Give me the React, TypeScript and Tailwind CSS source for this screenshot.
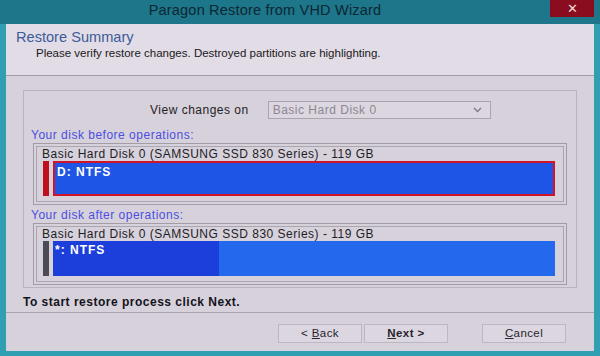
import React from "react";

const font = { fontFamily: '"Liberation Sans", Arial, sans-serif' };

function Partition({
  label,
  barColor,
  border,
  split,
}: {
  label: string;
  barColor: string;
  border: string;
  split?: boolean;
}) {
  return (
    <div className="flex h-[35px] gap-[4px] pl-[6px] pr-[8px]">
      <div className={`w-[6px] ${barColor}`} />
      <div className={`flex flex-1 ${border}`}>
        <div className={`relative ${split ? "w-[166px] bg-[#1c3fdc]" : "flex-1 bg-[#1e55e6]"}`}>
          <span className="absolute left-[2px] top-0 text-[12px] font-bold tracking-[1px] text-white">{label}</span>
        </div>
        {split && <div className="flex-1 bg-[#2468ee]" />}
      </div>
    </div>
  );
}

function DiskBox({ children }: { children: React.ReactNode }) {
  return (
    <div className="ml-[9px] mr-[9px] border border-[#a19ca6] p-[2px]">
      <div className="flex h-[56px] flex-col border border-[#aaa5ae]">
        <div className="h-[14px] pl-[5px] text-[12px] leading-[14px] tracking-[0.5px] text-[#1d1d24]">
          Basic Hard Disk 0 (SAMSUNG SSD 830 Series) - 119 GB
        </div>
        {children}
      </div>
    </div>
  );
}

function Btn({ children, bold }: { children: React.ReactNode; bold?: boolean }) {
  return (
    <div
      className={`flex h-[19px] w-[84px] items-center justify-center border border-[#bdb7c2] bg-[#dcd6e0] text-[11.5px] tracking-[0.4px] text-[#26242c] ${bold ? "font-bold" : ""}`}
    >
      {children}
    </div>
  );
}

export default function App() {
  return (
    <div style={font} className="flex h-[356px] w-[600px] flex-col overflow-hidden bg-[#2f9fb1]">
      {/* title bar */}
      <div className="relative flex h-[24px] items-center justify-center bg-[#1d7689] pb-[3px] pr-[70px]">
        <span className="text-[14.5px] leading-none tracking-[0.2px] text-[#0c2632]">Paragon Restore from VHD Wizard</span>
        <div className="absolute right-[6px] top-0 flex h-[17px] w-[44px] items-center justify-center bg-[#8a0d1f] text-[13px] leading-none text-[#f0d8dc]">
          ✕
        </div>
      </div>

      {/* window */}
      <div className="mx-[6px] flex h-[327px] flex-col bg-[#d7d1dc]">
        {/* header */}
        <div className="h-[52px] border-b border-[#9f9aa4] bg-[#e2dce6] pl-[10px] pt-[4px]">
          <div className="text-[14.6px] leading-[18px] text-[#3c5b98]">Restore Summary</div>
          <div className="pl-[20px] text-[11.5px] leading-[14px] text-[#1b1a20]">
            Please verify restore changes. Destroyed partitions are highlighting.
          </div>
        </div>

        {/* body */}
        <div className="flex flex-1 flex-col px-[17px] pt-[14px]">
          <div className="h-[198px] border border-[#bab4be] pt-[10px]">
            <div className="flex h-[18px] items-center">
              <span className="ml-[126px] text-[12px] tracking-[0.5px] text-[#1e1d24]">View changes on</span>
              <div className="ml-[19px] flex h-[18px] w-[223px] items-center justify-between border border-[#a9a4ad] bg-[#dcd6e0] pl-[4px] pr-[8px] text-[12px] tracking-[0.5px] text-[#8c8892]">
                <span>Basic Hard Disk 0</span>
                <svg width="9" height="6" viewBox="0 0 9 6">
                  <path d="M1 1 L4.5 4.5 L8 1" fill="none" stroke="#7d7983" strokeWidth="1.3" />
                </svg>
              </div>
            </div>

            <div className="mt-[9px] pl-[7px] text-[12px] leading-[14px] tracking-[0.5px] text-[#4b4fe0]">Your disk before operations:</div>
            <div className="mt-[1px]">
              <DiskBox>
                <Partition label="D: NTFS" barColor="bg-[#c0101e]" border="border-2 border-[#d0142a]" />
              </DiskBox>
            </div>

            <div className="mt-[3px] pl-[7px] text-[12px] leading-[14px] tracking-[0.5px] text-[#4b4fe0]">Your disk after operations:</div>
            <div className="mt-[1px]">
              <DiskBox>
                <Partition label="*: NTFS" barColor="bg-[#4c4a52]" border="" split />
              </DiskBox>
            </div>
          </div>
          <div className="mt-[7px] h-[14px] text-[12px] font-bold leading-[14px] tracking-[0.5px] text-[#14131a]">
            To start restore process click Next.
          </div>
        </div>

        {/* buttons */}
        <div className="flex h-[39px] items-start border-t border-[#a9a4ad] pl-[272px] pt-[11px]">
          <Btn>
            &lt;&nbsp;<u>B</u>ack
          </Btn>
          <div className="ml-[2px]">
            <Btn bold>
              <u>N</u>ext &gt;
            </Btn>
          </div>
          <div className="ml-[34px]">
            <Btn>
              <u>C</u>ancel
            </Btn>
          </div>
        </div>
      </div>
    </div>
  );
}
